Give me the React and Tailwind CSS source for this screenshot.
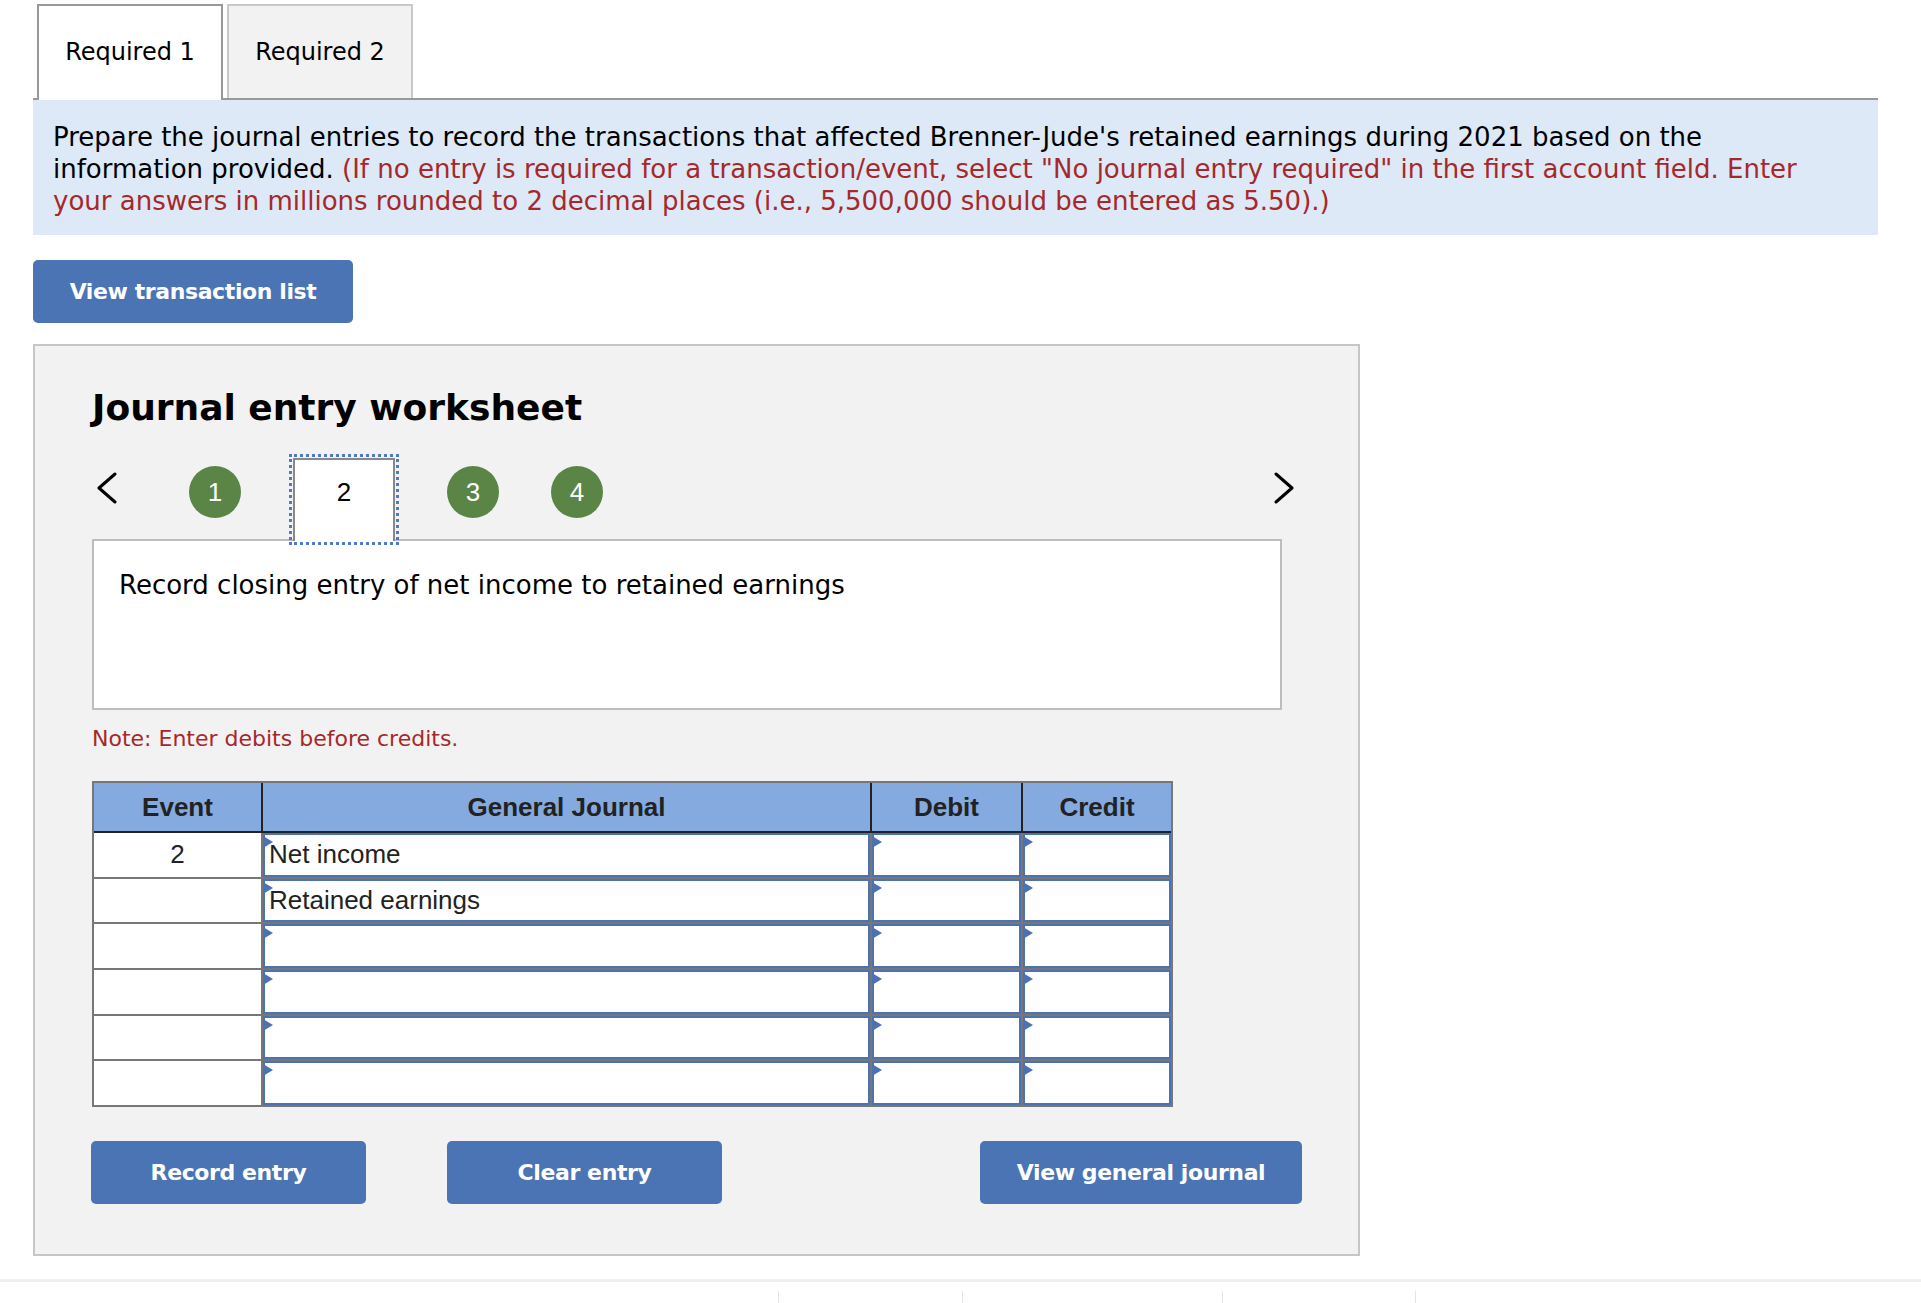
import React from "react";

const sans = "font-['DejaVu_Sans',Verdana,sans-serif]";
const arial = "font-['Liberation_Sans',Arial,sans-serif]";

const rows = [
  { event: "2", account: "Net income" },
  { event: "", account: "Retained earnings" },
  { event: "", account: "" },
  { event: "", account: "" },
  { event: "", account: "" },
  { event: "", account: "" },
];

const ChevronLeft = () => (
  <svg width="20" height="32" viewBox="0 0 20 32" fill="none">
    <polyline points="18,2 2,16 18,30" stroke="#000" strokeWidth="3" strokeLinecap="round" strokeLinejoin="round" />
  </svg>
);

const ChevronRight = () => (
  <svg width="20" height="32" viewBox="0 0 20 32" fill="none">
    <polyline points="2,2 18,16 2,30" stroke="#000" strokeWidth="3" strokeLinecap="round" strokeLinejoin="round" />
  </svg>
);

const Step = ({ n }) => (
  <div className={`mt-[8px] ml-[52px] flex h-[52px] w-[52px] items-center justify-center rounded-full bg-[#5a8547] text-[26px] text-white ${arial}`}>
    {n}
  </div>
);

const InputCell = ({ children }) => (
  <div className="relative flex h-[43.67px] items-center border-2 border-[#4a72b5] bg-white pl-[4px]">
    <span className="absolute -left-[2px] top-[1px] h-0 w-0 border-y-[6px] border-l-[10px] border-y-transparent border-l-[#4a72b5]"></span>
    {children}
  </div>
);

const BlueButton = ({ label, className }) => (
  <button
    className={`flex h-[63px] items-center justify-center rounded-[5px] bg-[#4a74b3] text-[22px] font-bold tracking-[-0.4px] text-white ${sans} ${className}`}
  >
    {label}
  </button>
);

export default function App() {
  return (
    <div className="min-h-[1303px] bg-white text-black">
      <div className="w-[1878px] pl-[33px]">
        {/* Tabs */}
        <div className="flex items-start border-b-2 border-[#999] pt-[4px]">
          <div className={`ml-[4px] -mb-[2px] flex h-[96px] w-[186px] items-center justify-center border-2 border-b-0 border-[#999] bg-white pb-[2px] text-[24px] ${sans}`}>
            Required 1
          </div>
          <div className={`ml-[4px] flex h-[94px] w-[186px] items-center justify-center border-2 border-b-0 border-[#c8c8c8] bg-[#f2f2f2] text-[24px] ${sans}`}>
            Required 2
          </div>
        </div>

        {/* Instructions */}
        <div className={`bg-[#dde9f7] px-[20px] pt-[21px] pb-[18px] text-[26px] leading-[32px] ${sans}`}>
          Prepare the journal entries to record the transactions that affected Brenner-Jude's retained earnings during 2021 based on the
          <br />
          information provided.{" "}
          <span className="text-[#a6282a]">
            (If no entry is required for a transaction/event, select "No journal entry required" in the first account field. Enter
            <br />
            your answers in millions rounded to 2 decimal places (i.e., 5,500,000 should be entered as 5.50).)
          </span>
        </div>

        <BlueButton label="View transaction list" className="mt-[25px] w-[320px]" />

        {/* Worksheet */}
        <div className="mt-[21px] w-[1327px] border-2 border-[#c6c6c6] bg-[#f2f2f2] pt-[40px] pb-[50px] pl-[57px]">
          <h2 className={`text-[36px] leading-[44px] font-bold ${sans}`}>Journal entry worksheet</h2>

          <div className="mt-[28px] flex h-[81px] w-[1202px] items-start">
            <div className="mt-[14px] ml-[5px]">
              <ChevronLeft />
            </div>
            <div className={`mt-[8px] ml-[72px] flex h-[52px] w-[52px] items-center justify-center rounded-full bg-[#5a8547] text-[26px] text-white ${arial}`}>
              1
            </div>
            <div className={`relative z-10 ml-[52px] h-[83px] w-[102px] border-2 border-b-0 border-[#888] bg-white pt-[16px] text-center text-[26px] leading-[32px] outline-[3px] outline-offset-1 outline-[#4f7bc6] outline-dotted ${arial}`}>
              2
            </div>
            <Step n="3" />
            <Step n="4" />
            <div className="mt-[14px] ml-auto">
              <ChevronRight />
            </div>
          </div>

          <div className={`h-[171px] w-[1190px] border-2 border-[#bdbdbd] bg-white pt-[28px] pl-[25px] text-[26px] leading-[32px] ${sans}`}>
            Record closing entry of net income to retained earnings
          </div>

          <p className={`mt-[15px] text-[22px] leading-[28px] text-[#a6282a] ${sans}`}>Note: Enter debits before credits.</p>

          {/* Journal table */}
          <div className={`mt-[28px] w-[1081px] border-2 border-[#777] text-[26px] text-[#222] ${arial}`}>
            <div className="grid grid-cols-[167px_607px_149px_148px] gap-x-[2px] border-b-2 border-[#222] bg-[#222] font-bold">
              <div className="flex h-[48px] items-center justify-center bg-[#84aadf]">Event</div>
              <div className="flex h-[48px] items-center justify-center bg-[#84aadf]">General Journal</div>
              <div className="flex h-[48px] items-center justify-center bg-[#84aadf]">Debit</div>
              <div className="flex h-[48px] items-center justify-center bg-[#84aadf]">Credit</div>
            </div>
            <div className="grid grid-cols-[167px_607px_149px_148px] gap-[2px] bg-[#777]">
              {rows.map((row, i) => (
                <React.Fragment key={i}>
                  <div className="flex h-[43.67px] items-center justify-center bg-white">{row.event}</div>
                  <InputCell>{row.account}</InputCell>
                  <InputCell />
                  <InputCell />
                </React.Fragment>
              ))}
            </div>
          </div>

          <div className="mt-[34px] flex">
            <BlueButton label="Record entry" className="-ml-[1px] w-[275px]" />
            <BlueButton label="Clear entry" className="ml-[81px] w-[275px]" />
            <BlueButton label="View general journal" className="ml-[258px] w-[322px]" />
          </div>
        </div>
      </div>

      {/* Bottom toolbar edge */}
      <div className="mt-[23px] h-[3px] w-full bg-[#f0f0f0]"></div>
      <div className="mt-[9px] flex h-[13px]">
        <div className="ml-[778px] w-px bg-[#e4e4e4]"></div>
        <div className="ml-[183px] w-px bg-[#e4e4e4]"></div>
        <div className="ml-[259px] w-px bg-[#e4e4e4]"></div>
        <div className="ml-[192px] w-px bg-[#e4e4e4]"></div>
      </div>
    </div>
  );
}
